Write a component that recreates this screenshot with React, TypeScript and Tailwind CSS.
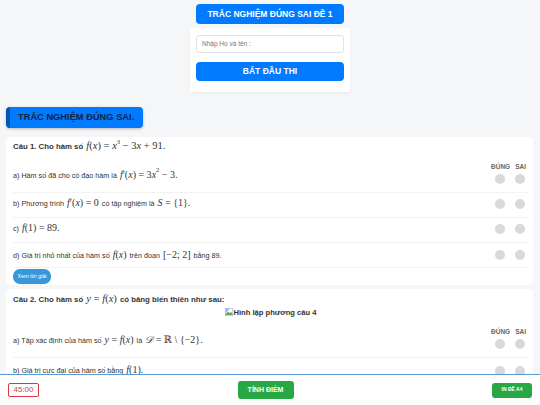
function I({ children }: { children: React.ReactNode }) {
  return <i className="font-['Liberation_Serif','DejaVu_Serif',serif] italic">{children}</i>;
}
function M({ children, size = "text-[10px]" }: { children: React.ReactNode; size?: string }) {
  return <span className={`font-['Liberation_Serif','DejaVu_Serif',serif] font-normal ${size} mx-[1px] text-[#333]`}>{children}</span>;
}
function Sup({ children }: { children: React.ReactNode }) {
  return <sup className="text-[6.5px] leading-none align-[2px]">{children}</sup>;
}
function Dots() {
  return (
    <div className="flex gap-[10px] shrink-0 mr-[4px]">
      <div className="w-[10px] h-[10px] rounded-full bg-[#d9d9d9]" />
      <div className="w-[10px] h-[10px] rounded-full bg-[#d9d9d9]" />
    </div>
  );
}
function Head() {
  return (
    <div className="flex justify-end gap-[5px] mr-[3px] text-[6.5px] leading-[8px] font-bold text-[#666]">
      <span>ĐÚNG</span>
      <span>SAI</span>
    </div>
  );
}
function Row({ children, h, pad, head, border = true }: { children: React.ReactNode; h: string; pad: string; head?: boolean; border?: boolean }) {
  return (
    <div className={`flex items-center justify-between ${h} ${pad} ${border ? "border-b border-[#f2f2f2]" : ""}`}>
      <div className={`text-[7.2px] leading-[12px] text-[#333] whitespace-pre ${head ? "mt-[3px]" : ""}`}>{children}</div>
      <div className="flex flex-col items-end gap-[3px]">
        {head && <Head />}
        <Dots />
      </div>
    </div>
  );
}
export default function App() {
  return (
    <div className="relative w-[540px] h-[405px] overflow-hidden bg-[#f4f6f7] font-['Liberation_Sans',Arial,sans-serif]">
      <div className="flex flex-col items-center pt-[4px]">
        <div className="w-[148px] h-[20px] rounded-[4px] bg-[#007bff] text-white text-[8.5px] font-bold flex items-center justify-center">
          TRẮC NGHIỆM ĐÚNG SAI ĐỀ 1
        </div>
        <div className="mt-[4px] w-[160px] h-[64px] bg-white shadow-[0_1px_2px_rgba(0,0,0,0.06)] px-[6px] pt-[7px]">
          <div className="h-[18px] rounded-[3px] border border-[#e2e2e2] px-[5px] flex items-center text-[6.5px] text-[#777]">
            Nhập Họ và tên :
          </div>
          <div className="mt-[9px] h-[19px] rounded-[4px] bg-[#007bff] text-white text-[8.5px] font-bold flex items-center justify-center">
            BẮT ĐẦU THI
          </div>
        </div>
      </div>

      <div className="mt-[15px] ml-[6px] w-[137px] h-[21px] rounded-[4px] bg-[#007bff] border-l-[4px] border-[#0056b3] shadow-[0_1px_3px_rgba(0,0,0,0.25)] flex items-center pl-[8px] text-[9.3px] font-bold text-[#12233f]">
        TRẮC NGHIỆM ĐÚNG SAI.
      </div>

      <div className="mt-[9px] mx-[6px] w-[527px] h-[148px] bg-white rounded-[4px] pl-[7px] pr-[4px] pt-[4px]">
        <div className="h-[10px] leading-[10px] text-[7.8px] font-bold text-[#333] whitespace-pre">
          Câu 1. Cho hàm số <M size="text-[10.5px]"><I>f</I>(<I>x</I>) = <I>x</I><Sup>3</Sup> − 3<I>x</I> + 91.</M>
        </div>
        <div className="mt-[8px]">
          <Row h="h-[34px]" pad="pb-[4px]" head>a) Hàm số đã cho có đạo hàm là <M><I>f</I>′(<I>x</I>) = 3<I>x</I><Sup>2</Sup> − 3.</M></Row>
          <Row h="h-[25px]" pad="pb-[3px]">b) Phương trình <M><I>f</I>′(<I>x</I>) = 0</M> có tập nghiệm là <M><I>S</I> = {"{"}1{"}"}.</M></Row>
          <Row h="h-[25px]" pad="pb-[3px]">c) <M><I>f</I>(1) = 89.</M></Row>
          <Row h="h-[25px]" pad="pb-0">d) Giá trị nhỏ nhất của hàm số <M><I>f</I>(<I>x</I>)</M> trên đoạn <M>[−2; 2]</M> bằng 89.</Row>
        </div>
        <div className="mt-[1px] w-[38px] h-[15px] rounded-[7px] bg-[#3498db] text-white text-[5.5px] flex items-center justify-center">
          Xem lời giải
        </div>
      </div>

      <div className="mt-[4px] mx-[6px] w-[527px] h-[120px] bg-white rounded-[4px] pl-[7px] pr-[4px] pt-[4px]">
        <div className="h-[12px] leading-[12px] text-[7.8px] font-bold text-[#333] whitespace-pre">
          Câu 2. Cho hàm số <M size="text-[10.5px]"><I>y</I> = <I>f</I>(<I>x</I>)</M> có bảng biến thiên như sau:
        </div>
        <div className="mt-[3px] h-[10px] flex items-center justify-center text-[7.6px] font-bold text-[#333]">
          <svg width="8" height="8" viewBox="0 0 16 16" className="-mt-[2px] shrink-0">
            <rect x="0.5" y="0.5" width="15" height="15" fill="#fff" stroke="#a0a0a0" />
            <path d="M1 12l5-5 3 3 3-2 3 3v3H1z" fill="#6aa86a" />
            <path d="M1 1h9L1 10z" fill="#8ab4f8" />
          </svg>
          Hình lập phương câu 4
        </div>
        <div className="mt-[6px]">
          <Row h="h-[34px]" pad="pb-[4px]" head>a) Tập xác định của hàm số <M><I>y</I> = <I>f</I>(<I>x</I>)</M> là <M><I>𝒟</I> = ℝ \ {"{"}−2{"}"}.</M></Row>
          <Row h="h-[25px]" pad="pb-0" border={false}>b) Giá trị cực đại của hàm số bằng <M><I>f</I>(1).</M></Row>
        </div>
      </div>

      <div className="absolute left-0 bottom-0 w-[540px] h-[31px] bg-white border-t-[1px] border-[#5b9bd5] flex items-center justify-between px-[8px]">
        <div className="w-[31px] h-[14px] rounded-[2px] border border-[#dc3545] text-[#c9434f] text-[8px] flex items-center justify-center font-medium">
          45:00
        </div>
        <div className="w-[56px] h-[18px] rounded-[3px] bg-[#28a745] text-white text-[7px] font-bold flex items-center justify-center">
          TÍNH ĐIỂM
        </div>
        <div className="w-[40px] h-[15px] rounded-[3px] bg-[#28a745] text-white text-[5px] font-bold flex items-center justify-center">
          IN ĐỀ A4
        </div>
      </div>
    </div>
  );
}
